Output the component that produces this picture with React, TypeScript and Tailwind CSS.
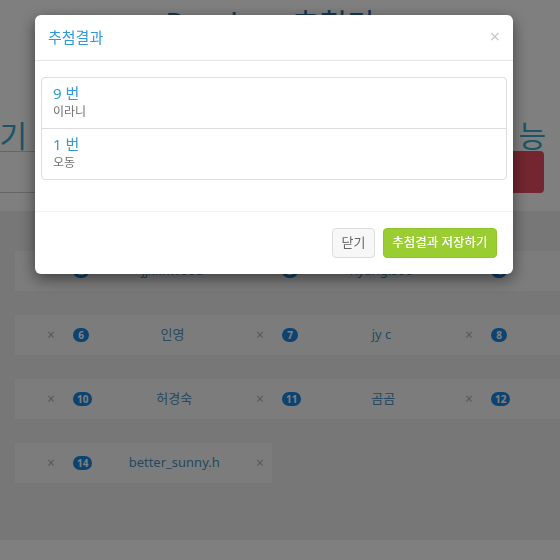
import React from 'react';

type Entry = { num: number; name: string };

const rows: Entry[][] = [
  [
    { num: 1, name: '오동' },
    { num: 2, name: 'jji.linwood' },
    { num: 3, name: 'hyang.soo' },
    { num: 4, name: '토리' },
  ],
  [
    { num: 5, name: '민지' },
    { num: 6, name: '인영' },
    { num: 7, name: 'jy c' },
    { num: 8, name: '달님' },
  ],
  [
    { num: 9, name: '이라니' },
    { num: 10, name: '허경숙' },
    { num: 11, name: '곰곰' },
    { num: 12, name: '하늘' },
  ],
  [
    { num: 13, name: 'sunny_day' },
    { num: 14, name: 'better_sunny.h' },
  ],
];

const winners = [
  { num: 9, name: '이라니' },
  { num: 1, name: '오동' },
];

function Cell({ num, name }: Entry) {
  return (
    <div className="flex h-[40px] w-[209px] shrink-0 items-center pl-[10px] pr-[8px]">
      <span className="flex h-[14px] min-w-[16px] items-center justify-center rounded-full bg-[#1a86e0] px-[4px] text-[10px] font-bold leading-none text-white">
        {num}
      </span>
      <span className="flex-1 truncate text-center text-[13px] text-[#4a92bd]">{name}</span>
      <span className="text-[14px] leading-none text-[#b5b5b5]">×</span>
    </div>
  );
}

function Row({ items }: { items: Entry[] }) {
  const [first, ...rest] = items;
  return (
    <div className="flex w-max bg-[#f9f9f9]">
      {/* first entry is cut off by the container edge */}
      <div className="flex w-[48px] shrink-0 justify-end overflow-hidden">
        <Cell {...first} />
      </div>
      {rest.map((e) => (
        <Cell key={e.num} {...e} />
      ))}
    </div>
  );
}

function ResultModal() {
  return (
    <div className="fixed inset-0 bg-black/50">
      <div className="ml-[35px] mt-[15px] w-[478px] rounded-[6px] bg-white shadow-[0_5px_15px_rgba(0,0,0,0.5)]">
        {/* Header */}
        <div className="flex h-[46px] items-center justify-between border-b border-[#e5e5e5] px-[13px]">
          <h4 className="text-[15px] font-normal text-[#2f9bd8]">추첨결과</h4>
          <button className="-mt-[3px] text-[18px] leading-none text-[#c8c8c8]">×</button>
        </div>

        {/* Body */}
        <div className="px-[6px] pb-[31px] pt-[16px]">
          <div className="rounded-[4px] border border-[#dddddd]">
            {winners.map((w, i) => (
              <div
                key={w.num}
                className={`px-[11px] pb-[8px] pt-[5px] ${i > 0 ? 'border-t border-[#dddddd]' : ''}`}
              >
                <div className="text-[15px] leading-[20px] text-[#2f9bd8]">{w.num} 번</div>
                <div className="text-[12px] leading-[17px] text-[#6f6f6f]">{w.name}</div>
              </div>
            ))}
          </div>
        </div>

        {/* Footer */}
        <div className="flex justify-end gap-[8px] border-t border-[#f2f2f2] px-[16px] pb-[16px] pt-[16px]">
          <button className="flex h-[30px] w-[43px] items-center justify-center rounded-[4px] border border-[#dcdcdc] bg-[#f7f7f7] text-[13px] text-[#666666]">
            닫기
          </button>
          <button className="flex h-[30px] w-[114px] items-center justify-center rounded-[4px] border border-[#8fc42a] bg-[#9acd32] text-[12.5px] font-medium text-white">
            추첨결과 저장하기
          </button>
        </div>
      </div>
    </div>
  );
}

export default function App() {
  return (
    <div className="relative h-[560px] w-[560px] overflow-hidden bg-white font-['Noto_Sans','Noto_Sans_CJK_KR',sans-serif]">
      {/* Title */}
      <h1 className="pr-[20px] pt-[9px] text-center text-[30px] font-normal leading-[30px] text-[#2d6da3]">
        Random 추첨기
      </h1>

      {/* Column headings */}
      <div className="mt-[82px] flex h-[30px] justify-between pr-[10px] text-[30px] leading-[30px] text-[#3aa8d0]">
        <div className="flex w-[27px] justify-end whitespace-nowrap">참가자 입력하기</div>
        <div className="whitespace-nowrap tracking-[4px]">추첨 기능</div>
      </div>

      {/* Input group */}
      <div className="-ml-[20px] mr-[16px] flex h-[42px]">
        <input className="flex-1 rounded-l-[4px] border border-r-0 border-[#cccccc] bg-white" />
        <button className="w-[31px] rounded-r-[4px] bg-[#e74c5e]" />
      </div>

      {/* Participants */}
      <div className="mt-[18px] h-[329px] bg-[#eeeeee] pl-[15px] pt-[40px]">
        <div className="flex flex-col gap-[24px] overflow-hidden">
          {rows.map((r, i) => (
            <Row key={i} items={r} />
          ))}
        </div>
      </div>

      <ResultModal />
    </div>
  );
}
